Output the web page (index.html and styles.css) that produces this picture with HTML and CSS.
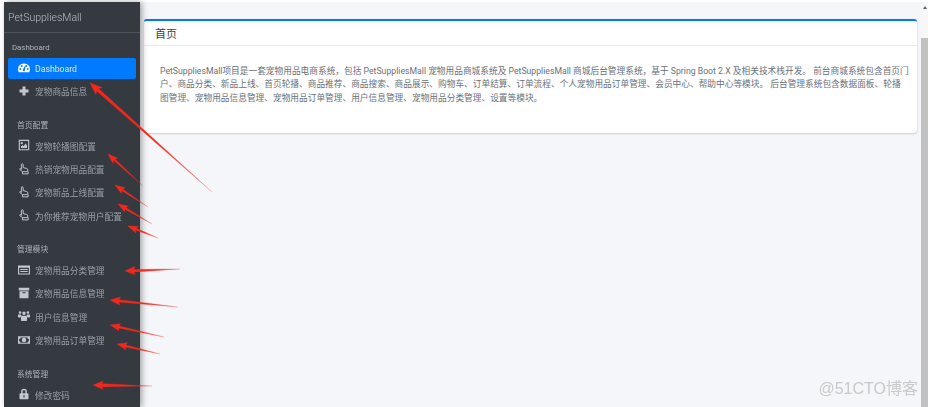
FILE: index.html
```html
<!DOCTYPE html>
<html lang="zh-CN">
  <head>
    <meta charset="UTF-8" />
    <title>PetSuppliesMall</title>
    <link rel="stylesheet" href="styles.css">
  </head>
  <body>
    <svg class="sprite" width="0" height="0">
      <symbol id="i-gauge" viewBox="0 0 16 16"><path fill="currentColor" fill-rule="evenodd" d="M8 2a7.6 7.6 0 0 0-8 7.6c0 1.500.4 2.900 1.100 4.100h13.800A8 8 0 0 0 16 9.600 7.600 7.600 0 0 0 8 2zM3 10.500a1.200 1.200 0 1 1 0-2.400 1.200 1.200 0 0 1 0 2.400zm2-4a1.200 1.200 0 1 1 0-2.400 1.200 1.200 0 0 1 0 2.400zm3.900 5.500a1.500 1.500 0 0 1-2.200-1.900l2.800-5.400.8.300zM11 6.500a1.200 1.200 0 1 1 0-2.400 1.200 1.200 0 0 1 0 2.400zm2 4a1.200 1.200 0 1 1 0-2.400 1.200 1.200 0 0 1 0 2.400z"/></symbol>
      <symbol id="i-plus" viewBox="0 0 16 16"><path fill="currentColor" d="M6 2h4v4h4v4h-4v4H6v-4H2V6h4z"/></symbol>
      <symbol id="i-image" viewBox="0 0 16 16"><path fill="currentColor" fill-rule="evenodd" d="M1 1h14v14H1zm1.500 1.500v11h11v-11zM5 4a1.500 1.500 0 1 1 0 3 1.500 1.500 0 0 1 0-3zM4 12v-2l2-2 1.500 1.500L10 6l2 2.500V12z"/></symbol>
      <symbol id="i-hand" viewBox="0 0 16 16"><path fill="none" stroke="currentColor" stroke-width="1.300" stroke-linejoin="round" d="M4.500 8.500V2.200a1.200 1.200 0 0 1 2.400 0v4l4.600 1.100c1 .3 1.500.9 1.500 1.800v2.400H6L2.500 8.800C1.500 7.800 3 6.500 4.500 8.500zM6 11.500v3h7.500v-3"/></symbol>
      <symbol id="i-list" viewBox="0 0 16 16"><path fill="currentColor" fill-rule="evenodd" d="M0 2h16v12H0zm1.500 3v7.500h13V5zM3 6.500h10V8H3zm0 2.700h10v1.500H3z"/></symbol>
      <symbol id="i-box" viewBox="0 0 16 16"><path fill="currentColor" d="M1 1h14v3.500H1zm1 4.500h12V15H2zm4 1.500v1.300h4V7z"/></symbol>
      <symbol id="i-users" viewBox="0 0 16 16"><path fill="currentColor" d="M8 2a2.300 2.300 0 1 1 0 4.600A2.300 2.300 0 0 1 8 2zM2.800 1.500a1.800 1.800 0 1 1 0 3.600 1.800 1.800 0 0 1 0-3.600zm10.400 0a1.800 1.800 0 1 1 0 3.600 1.800 1.800 0 0 1 0-3.600zM0 6h3.800c.4 1 1 1.400 1 1.500-.7.500-1.300 1.500-1.300 2.500H1c-.6 0-1-.4-1-1zm16 0h-3.800c-.4 1-1 1.400-1 1.500.7.500 1.300 1.500 1.300 2.500H15c.6 0 1-.4 1-1zM5.500 7.500h5c1 0 1.500 1 1.500 2.500v3.500c0 .5-.4 1-1 1H5c-.6 0-1-.5-1-1V10c0-1.500.5-2.500 1.500-2.500z"/></symbol>
      <symbol id="i-money" viewBox="0 0 16 16"><path fill="currentColor" fill-rule="evenodd" d="M0 3h16v10H0zm3.500 1.500A2 2 0 0 1 1.500 6.500v3a2 2 0 0 1 2 2h9a2 2 0 0 1 2-2v-3a2 2 0 0 1-2-2zM8 5a3 3 0 1 1 0 6 3 3 0 0 1 0-6z"/></symbol>
      <symbol id="i-lock" viewBox="0 0 16 16"><path fill="currentColor" fill-rule="evenodd" d="M8 1a3.800 3.800 0 0 1 3.800 3.800V7H13c.5 0 1 .5 1 1v6c0 .5-.5 1-1 1H3c-.5 0-1-.5-1-1V8c0-.5.5-1 1-1h1.200V4.800A3.800 3.800 0 0 1 8 1zm0 2a1.800 1.800 0 0 0-1.800 1.800V7h3.600V4.800A1.800 1.800 0 0 0 8 3zm-.8 6.500v3h1.600v-3z"/></symbol>
    </svg>

    <div class="app">
      <aside class="sidebar">
        <div class="brand">PetSuppliesMall</div>

        <div class="nav-header nav-header-first">Dashboard</div>
        <a class="nav-item is-active"><svg class="icon"><use href="#i-gauge"/></svg>Dashboard</a>
        <a class="nav-item"><svg class="icon"><use href="#i-plus"/></svg>宠物商品信息</a>

        <div class="nav-header">首页配置</div>
        <a class="nav-item"><svg class="icon"><use href="#i-image"/></svg>宠物轮播图配置</a>
        <a class="nav-item"><svg class="icon"><use href="#i-hand"/></svg>热销宠物用品配置</a>
        <a class="nav-item"><svg class="icon"><use href="#i-hand"/></svg>宠物新品上线配置</a>
        <a class="nav-item"><svg class="icon"><use href="#i-hand"/></svg>为你推荐宠物用户配置</a>

        <div class="nav-header">管理模块</div>
        <a class="nav-item"><svg class="icon"><use href="#i-list"/></svg>宠物用品分类管理</a>
        <a class="nav-item"><svg class="icon"><use href="#i-box"/></svg>宠物用品信息管理</a>
        <a class="nav-item"><svg class="icon"><use href="#i-users"/></svg>用户信息管理</a>
        <a class="nav-item"><svg class="icon"><use href="#i-money"/></svg>宠物用品订单管理</a>

        <div class="nav-header">系统管理</div>
        <a class="nav-item"><svg class="icon"><use href="#i-lock"/></svg>修改密码</a>
      </aside>

      <main class="content">
        <section class="card">
          <h3 class="card-title">首页</h3>
          <p class="card-body">PetSuppliesMall项目是一套宠物用品电商系统，包括 PetSuppliesMall 宠物用品商城系统及 PetSuppliesMall 商城后台管理系统，基于 Spring Boot 2.X 及相关技术栈开发。 前台商城系统包含首页门<br>户、商品分类、新品上线、首页轮播、商品推荐、商品搜索、商品展示、购物车、订单结算、订单流程、个人宠物用品订单管理、会员中心、帮助中心等模块。 后台管理系统包含数据面板、轮播<br>图管理、宠物用品信息管理、宠物用品订单管理、用户信息管理、宠物用品分类管理、设置等模块。</p>
        </section>
      </main>

      <div class="scrollbar"><span class="scroll-arrow"></span><span class="scroll-thumb"></span></div>
    </div>

    <svg class="arrows" width="928" height="407" viewBox="0 0 928 407">
      <defs>
        <linearGradient id="fade">
          <stop offset="0" stop-color="#f5271c"/>
          <stop offset=".55" stop-color="#f5271c"/>
          <stop offset="1" stop-color="#f5271c" stop-opacity=".4"/>
        </linearGradient>
      </defs>
      <g fill="url(#fade)" stroke="url(#fade)" stroke-width=".4">
        <polygon points="90,83 96,94.400 96.500,90.800 212,192 98.500,88.600 102,87.600"/>
        <polygon points="108,154 113,163.400 113.300,160.100 143,186 114.700,158.700 117.800,158.200"/>
        <polygon points="115,185 121.400,193.500 121.500,190.500 148,207 122.600,188.900 125.200,187.700"/>
        <polygon points="118,204 124.800,212.100 124.800,209.200 152,224 125.800,207.400 128.400,206.100"/>
        <polygon points="128,226 136,233 135.500,230.100 158,238 136.300,228.300 138.600,226.400"/>
        <polygon points="125,271 135.100,274.600 134,271.900 180,269 134,269.500 134.900,266.600"/>
        <polygon points="110,300 119.600,305 118.900,302.100 178,307 119.100,299.700 120.400,297"/>
        <polygon points="110,325 119,330.700 118.600,328 164,337 119,326 120.600,323.700"/>
        <polygon points="117,344 125.900,349.800 125.500,347 160,354 125.900,345 127.500,342.800"/>
        <polygon points="93,385 103,389.200 102,386.700 152,386 102,383.700 103,381.200"/>
      </g>
    </svg>

    <div class="watermark">@51CTO博客</div>
  </body>
</html>
```

FILE: styles.css
```css
html {
  box-sizing: border-box;
  font-family: "Roboto", "Noto Sans CJK SC", sans-serif;
  font-size: 9px;
}

*,
*:before,
*:after {
  box-sizing: inherit;
}

body {
  margin: 0;
  width: 928px;
  height: 407px;
  overflow: hidden;
  position: relative;
  background: #fff;
}

.sprite {
  position: absolute;
}

/* la captura original esta reescalada, de ahi el blur */
.app {
  display: flex;
  height: 100%;
  padding: 2px 0 0 4px;
  filter: blur(0.35px);
}

/* sidebar */
.sidebar {
  flex: 0 0 136px;
  height: 100%;
  padding: 0 4px;
  background: #343a40;
  color: #aeb3ba;
  box-shadow: 2px 0 6px rgba(0, 0, 0, 0.35);
  position: relative;
  z-index: 1;
}

.brand {
  height: 31px;
  margin: 0 -4px;
  padding: 9px 0 0 4px;
  border-bottom: 1px solid #4b545c;
  font-size: 10.500px;
  font-weight: 300;
  line-height: 14px;
  color: #b9bec5;
}

.nav-header {
  height: 21px;
  margin-top: 12.500px;
  padding-left: 9px;
  font-size: 7.800px;
  line-height: 21px;
}

.nav-header-first {
  margin-top: 4px;
  padding-left: 4px;
}

.nav-item {
  display: flex;
  align-items: center;
  height: 21px;
  margin-bottom: 2.300px;
  padding-left: 10px;
  border-radius: 2px;
  font-size: 8.700px;
  color: #9ba0a7;
}

.nav-item.is-active {
  background: #007bff;
  color: #dcebff;
}

.icon {
  flex: none;
  width: 12px;
  height: 12px;
  margin: -2px 5px 0 0;
  color: #c2c7d0;
}

.is-active .icon {
  color: #fff;
}

/* main */
.content {
  flex: 1;
  padding: 17px 4px 0 4px;
  background: #f4f6f9;
}

.card {
  height: 114px;
  background: #fff;
  border-top: 2px solid #007bff;
  border-radius: 3px;
  box-shadow: 0 0 1px rgba(0, 0, 0, 0.2), 0 1px 2px rgba(0, 0, 0, 0.15);
}

.card-title {
  height: 25px;
  margin: 0;
  padding-left: 11px;
  border-bottom: 1px solid #e9ecef;
  font-size: 11px;
  font-weight: 400;
  line-height: 28px;
  color: #3c4248;
}

.card-body {
  margin: 0;
  padding: 18.500px 4px 0 16px;
  font-size: 8.700px;
  line-height: 13.700px;
  color: #6a7077;
}

.scrollbar {
  flex: 0 0 7px;
  display: flex;
  flex-direction: column;
  align-items: center;
  background: #f7f7f7;
}

.scroll-arrow {
  margin-top: 4px;
  border: 2.500px solid transparent;
  border-top: 0;
  border-bottom: 3px solid #606060;
}

.scroll-thumb {
  flex: 1;
  width: 100%;
  margin-top: 29px;
  background: #c1c1c1;
}

/* over the page */
.arrows {
  position: absolute;
  left: 0;
  top: 0;
  z-index: 2;
}

.watermark {
  position: absolute;
  right: 10px;
  bottom: 9px;
  z-index: 2;
  font-family: "Liberation Sans", "Noto Sans CJK SC", sans-serif;
  font-size: 16px;
  line-height: 18px;
  color: #c9c9c9;
}
```
